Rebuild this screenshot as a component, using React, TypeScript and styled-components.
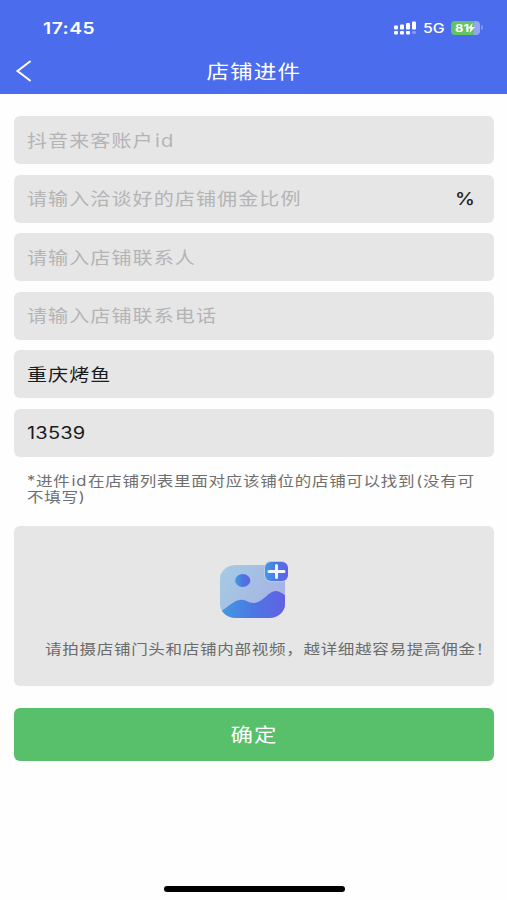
import React from "react";
import styled, { createGlobalStyle } from "styled-components";

const GlobalStyle = createGlobalStyle`
  * { box-sizing: border-box; }
  body {
    margin: 0;
    background: #fefefe;
    font-family: "Inter", "Noto Sans CJK SC", sans-serif;
  }
`;

const Page = styled.div`
  display: flex;
  flex-direction: column;
  width: 507px;
  height: 900px;
  overflow: hidden;
`;

const Header = styled.header`
  height: 94px;
  background: #4c6cee;
  color: #fff;
  flex: none;
`;

const StatusBar = styled.div`
  display: flex;
  align-items: center;
  justify-content: space-between;
  height: 48px;
  padding: 7px 24px 0 43px;
`;

const StatusIcons = styled.div`
  display: flex;
  align-items: center;
`;

/* Wide lettering: glyphs are stretched horizontally by a fixed ratio. */
const Wide = styled.span<{
  $size: number;
  $stretch?: number;
  $tracking?: number;
  $wordGap?: number;
  $weight?: number;
  $origin?: string;
}>`
  display: inline-block;
  white-space: nowrap;
  font-size: ${(p) => p.$size}px;
  font-weight: ${(p) => p.$weight ?? 400};
  letter-spacing: ${(p) => p.$tracking ?? 0}px;
  word-spacing: ${(p) => p.$wordGap ?? 0}px;
  transform: scaleX(${(p) => p.$stretch ?? 1.18});
  transform-origin: ${(p) => p.$origin ?? "left center"};
`;

const Network = styled.div`
  width: 28px;
  margin-left: 6px;
  line-height: 16px;
`;

const Battery = styled.div`
  display: flex;
  align-items: center;
  justify-content: center;
  width: 29px;
  height: 14px;
  border-radius: 4px;
  background: linear-gradient(90deg, #62c466 81%, #94a8ef 81%);
  line-height: 14px;
`;

const BatteryTip = styled.div`
  width: 2px;
  height: 5px;
  margin-left: 1px;
  border-radius: 0 2px 2px 0;
  background: #7d94f0;
`;

const NavBar = styled.div`
  display: grid;
  grid-template-columns: 48px 1fr 48px;
  align-items: center;
  height: 46px;
  text-align: center;
  line-height: 30px;
`;

const Title = styled.div`
  padding-top: 3px;
`;

const BackButton = styled.button`
  display: flex;
  padding: 0 0 0 15px;
  border: 0;
  background: none;
  color: inherit;
`;

const Form = styled.main`
  display: flex;
  flex-direction: column;
  padding: 22px 13px 0 14px;
`;

const Fields = styled.div`
  display: grid;
  grid-auto-rows: 48px;
  row-gap: 10.6px;
`;

const Field = styled.div<{ $filled?: boolean }>`
  display: flex;
  align-items: center;
  justify-content: space-between;
  padding: 1px 19px 0 13.4px;
  border-radius: 6px;
  background: #e6e6e6;
  color: ${(p) => (p.$filled ? "#1c1c1c" : "#b4b4b6")};
  line-height: 24px;
`;

const Unit = styled.span`
  color: #222;
`;

const Hint = styled.p`
  display: flex;
  flex-direction: column;
  align-items: flex-start;
  height: 69px;
  margin: 0;
  padding: 16px 0 0 13px;
  color: #6f6f6f;
  line-height: 16.5px;
`;

const Upload = styled.div`
  display: flex;
  flex-direction: column;
  height: 160px;
  padding-top: 34px;
  border-radius: 6px;
  background: #e6e6e6;
  color: #6b6b6b;
`;

const UploadIcon = styled.svg`
  display: block;
  margin-left: 205px;
`;

const UploadText = styled.div`
  margin: 17px 0 0 31px;
  line-height: 22px;
`;

const Submit = styled.button`
  display: flex;
  align-items: center;
  justify-content: center;
  height: 53px;
  margin-top: 22px;
  padding: 0 0 2px;
  border: 0;
  border-radius: 6px;
  background: #58bf6b;
  color: #fff;
  font-family: inherit;
`;

const HomeIndicator = styled.div`
  width: 181px;
  height: 6px;
  margin: auto auto 8px 164px;
  border-radius: 3px;
  background: #000;
`;

const fields: { text: string; filled?: boolean; unit?: string }[] = [
  { text: "抖音来客账户 id" },
  { text: "请输入洽谈好的店铺佣金比例", unit: "%" },
  { text: "请输入店铺联系人" },
  { text: "请输入店铺联系电话" },
  { text: "重庆烤鱼", filled: true },
  { text: "13539", filled: true },
];

const SignalIcon = () => (
  <svg width="24" height="14" viewBox="0 0 24 14" fill="#fff">
    <rect x="1" y="4.5" width="4" height="4" rx="1" />
    <rect x="7" y="3.5" width="4" height="5" rx="1" />
    <rect x="13" y="2" width="4" height="6.5" rx="1" />
    <rect x="19" y="0.5" width="4" height="8" rx="1" />
    <rect x="1" y="10" width="4" height="3.5" rx="1" />
    <rect x="7" y="10" width="4" height="3.5" rx="1" />
    <rect x="13" y="10" width="4" height="3.5" rx="1" />
    <rect x="19" y="10" width="4" height="3" rx="1" opacity="0.3" />
  </svg>
);

const PictureIcon = () => (
  <UploadIcon width="71" height="60" viewBox="0 0 71 60">
    <defs>
      <linearGradient id="sky" x1="0" y1="0" x2="1" y2="0.5">
        <stop offset="0" stopColor="#a3cce3" />
        <stop offset="1" stopColor="#a9b2e4" />
      </linearGradient>
      <linearGradient id="hill" x1="0" y1="0" x2="1" y2="0">
        <stop offset="0" stopColor="#439be2" />
        <stop offset="0.5" stopColor="#4b77e3" />
        <stop offset="1" stopColor="#6460e3" />
      </linearGradient>
      <clipPath id="frame">
        <rect x="1" y="5" width="65" height="53" rx="16" ry="14" />
      </clipPath>
    </defs>
    <g clipPath="url(#frame)">
      <rect x="1" y="5" width="65" height="53" fill="url(#sky)" />
      <path
        d="M1 52C9 47 14 41 21 40C27 39 28 43 35 43C45 42 49 31 57 31C61 31 64 34 67 36V59H1Z"
        fill="url(#hill)"
      />
    </g>
    <ellipse cx="23.7" cy="20.5" rx="7.6" ry="6.4" fill="url(#hill)" />
    <rect x="45" y="1" width="24" height="21" rx="7" fill="#b8c8e6" />
    <rect x="46" y="2" width="23" height="19" rx="6" fill="url(#hill)" />
    <path d="M50 11.5H65M57.5 5.5V17.5" stroke="#f0f5ff" strokeWidth="3" strokeLinecap="round" />
  </UploadIcon>
);

export default function App() {
  return (
    <>
      <GlobalStyle />
      <Page>
        <Header>
          <StatusBar>
            <Wide $size={16} $weight={600} $stretch={1.2} $tracking={0.45}>17:45</Wide>
            <StatusIcons>
              <SignalIcon />
              <Network>
                <Wide $size={13} $weight={500} $stretch={1.22}>5G</Wide>
              </Network>
              <Battery>
                <Wide $size={11} $weight={700} $stretch={1.18} $origin="center">81</Wide>
                <svg width="8" height="10" viewBox="0 0 8 10" fill="#fff">
                  <path d="M5.5 0L1 5.5H3.5L2.5 10L8 4H5Z" />
                </svg>
              </Battery>
              <BatteryTip />
            </StatusIcons>
          </StatusBar>
          <NavBar>
            <BackButton aria-label="返回">
              <svg width="17" height="22" viewBox="0 0 17 22" fill="none" stroke="#fff" strokeWidth="2">
                <path d="M15 1.5L2.5 11L15 20.5" strokeLinecap="round" />
              </svg>
            </BackButton>
            <Title>
              <Wide $size={19} $stretch={1.19} $tracking={0.9} $origin="center">店铺进件</Wide>
            </Title>
          </NavBar>
        </Header>
        <Form>
          <Fields>
            {fields.map((f) => (
              <Field key={f.text} $filled={f.filled}>
                <Wide $size={17} $tracking={f.text === "13539" ? 0.15 : 0.9} $wordGap={-4.6}>
                  {f.text}
                </Wide>
                {f.unit && (
                  <Unit>
                    <Wide $size={17} $weight={500} $origin="right center">{f.unit}</Wide>
                  </Unit>
                )}
              </Field>
            ))}
          </Fields>
          <Hint>
            <Wide $size={14} $tracking={0.6} $wordGap={-3.7}>
              *进件 id 在店铺列表里面对应该铺位的店铺可以找到 (没有可
            </Wide>
            <Wide $size={14} $tracking={0.6}>不填写)</Wide>
          </Hint>
          <Upload>
            <PictureIcon />
            <UploadText>
              <Wide $size={14} $tracking={0.6}>请拍摄店铺门头和店铺内部视频，越详细越容易提高佣金！</Wide>
            </UploadText>
          </Upload>
          <Submit>
            <Wide $size={19} $tracking={0.9} $origin="center">确定</Wide>
          </Submit>
        </Form>
        <HomeIndicator />
      </Page>
    </>
  );
}
